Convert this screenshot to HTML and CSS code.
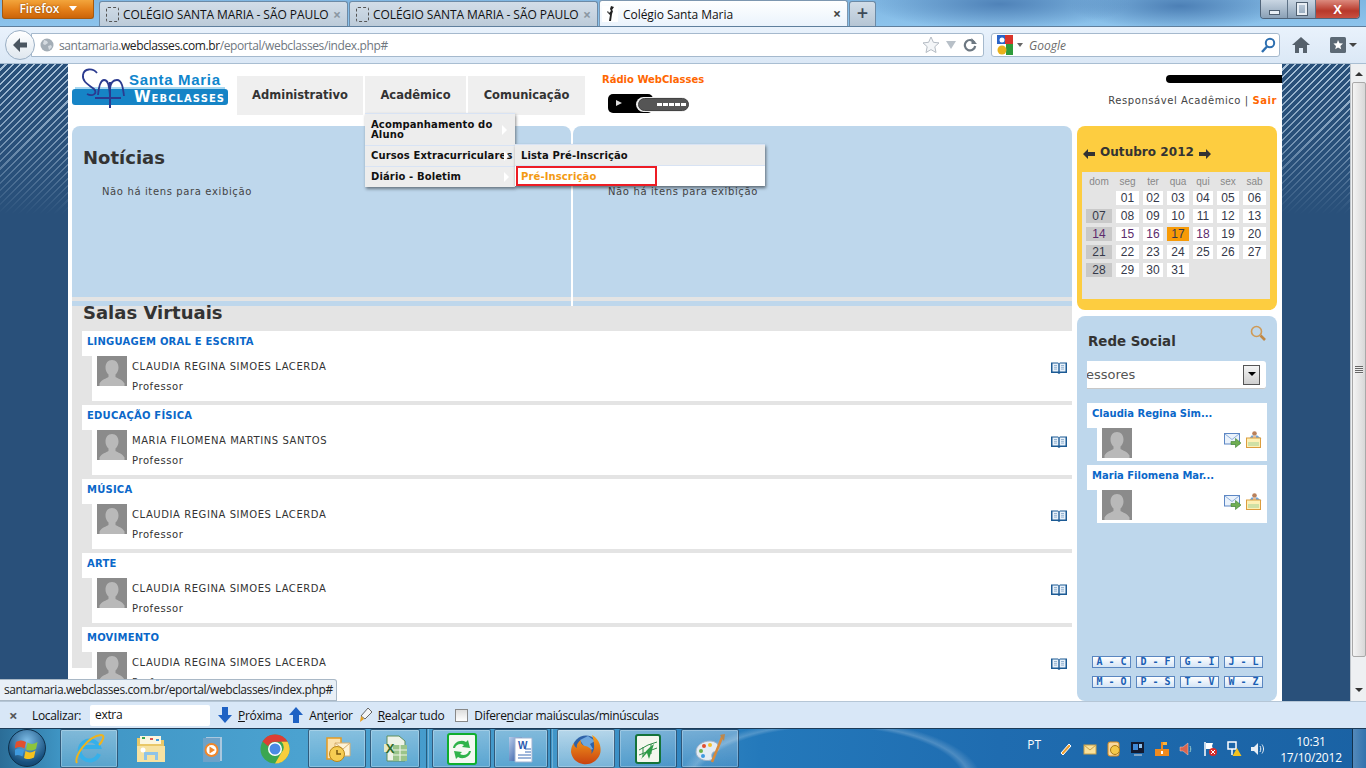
FILE: index.html
```html
<!DOCTYPE html>
<html lang="pt">
<head>
<meta charset="utf-8">
<title>Colégio Santa Maria</title>
<link rel="stylesheet" href="styles.css">
</head>
<body>
<svg class="defs" width="0" height="0" aria-hidden="true">
  <defs>
    <linearGradient id="foxg" x1="0" y1="0" x2="0" y2="1"><stop offset="0" stop-color="#f7a21e"/><stop offset="1" stop-color="#c9420f"/></linearGradient>
    <linearGradient id="wordg" x1="0" y1="0" x2="1" y2="1"><stop offset="0" stop-color="#b9cdea"/><stop offset="1" stop-color="#234f9e"/></linearGradient>
  </defs>
  <symbol id="avatar" viewBox="0 0 30 30"><rect width="30" height="30" fill="#8b8b8b"/><path d="M15 4c4 0 6.500 3 6.500 7.500 0 3-1.300 5.500-3 7v2.500c2 1.500 7 2.500 9 6.500v2.500H2.500V27.500c2-4 7-5 9-6.500v-2.500c-1.700-1.500-3-4-3-7C8.500 7 11 4 15 4z" fill="#b9b9b9"/></symbol>
  <symbol id="book" viewBox="0 0 16 14"><path d="M0 1.500h7l1 1 1-1h7v10.500H9.500l-1.500 1-1.500-1H0z" fill="#1c5a94"/><path d="M1.500 2.500h5.800v8H1.500zM8.700 2.500h5.800v8H8.700z" fill="#e8f1fa"/><path d="M3 4.500h3M3 6.300h3M3 8.100h3M10 4.500h3M10 6.300h3M10 8.100h3" stroke="#7fa3c6" stroke-width=".8"/></symbol>
  <symbol id="mail" viewBox="0 0 17 15"><rect x=".5" y=".5" width="15" height="10.500" fill="#eaf2fb" stroke="#5c86c4"/><path d="M1 1l7 5.500L15 1" fill="none" stroke="#8fb0dc"/><path d="M7 8.500h4.500V5.500L17 10l-5.500 4.500v-3H7z" fill="#6fae52" stroke="#3e7f2f" stroke-width=".6"/></symbol>
  <symbol id="folder" viewBox="0 0 16 17"><circle cx="8.500" cy="2.500" r="2.300" fill="#b9805a"/><path d="M3 8l2.500-3.500h6L15.500 8z" fill="#6fa5d8"/><path d="M7 4.500h3v3H7z" fill="#e8c0a0"/><rect x=".5" y="7" width="14" height="9.500" fill="#fdf0b5" stroke="#dc9d3e"/><rect x="2" y="11" width="11" height="4" fill="#cfe0a5"/></symbol>
  <symbol id="bluearrow" viewBox="0 0 14 16"><path d="M4 0h6v8h4l-7 8-7-8h4z"/></symbol>
</svg>

<header class="tabbar">
  <div class="ffbtn">Firefox <span class="ffarrow"></span></div>
  <div class="tab"><span class="dash"></span><span class="tabtext">COLÉGIO SANTA MARIA - SÃO PAULO</span><span class="tabx">×</span></div>
  <div class="tab"><span class="dash"></span><span class="tabtext">COLÉGIO SANTA MARIA - SÃO PAULO</span><span class="tabx">×</span></div>
  <div class="tab active">
    <svg class="favicon" viewBox="0 0 16 16"><rect width="16" height="16" fill="#fff"/><path d="M9 0l3 1-2 3 1 1-1 3-1 7H7l1-6-3-3 1-1 1 2 2-2-1-2z" fill="#222"/></svg>
    <span class="tabtext">Colégio Santa Maria</span><span class="tabx dark">×</span></div>
  <div class="newtab">+</div>
  <div class="winctl">
    <span class="wbtn"><span class="wmin"></span></span>
    <span class="wbtn"><span class="wmax"></span></span>
    <span class="wbtn wclose">X</span>
  </div>
</header>

<nav class="navbar">
  <div class="back"><svg viewBox="0 0 18 18" width="18" height="18"><path d="M9 2L2 9l7 7v-4.500h7v-5H9z" fill="#4a5560"/></svg></div>
  <div class="urlbar">
    <svg class="globe" viewBox="0 0 14 14" width="14" height="14"><circle cx="7" cy="7" r="6.500" fill="#a3adb6"/><path d="M4 2l3 1 1 2-3 2-2-1zM8 8l3-1 1 2-3 3z" fill="#d4dae0"/></svg>
    <span class="url"><span class="dim">santamaria.</span>webclasses.com.br<span class="dim">/eportal/webclasses/index.php#</span></span>
    <svg class="star" viewBox="0 0 18 18" width="18" height="18"><path d="M9 1l2.400 5.300 5.600.6-4.200 3.800 1.200 5.800L9 13.600l-5 2.900 1.200-5.800L1 6.900l5.600-.6z" fill="#f4f6f8" stroke="#b5bcc4"/></svg>
    <span class="urldrop"></span>
    <svg class="reload" viewBox="0 0 14 14" width="14" height="14"><path d="M11.500 4.500A5.200 5.200 0 1 0 12.200 8" fill="none" stroke="#6d7882" stroke-width="2.200"/><path d="M8.500 0v6h5.500z" fill="#6d7882"/></svg>
  </div>
  <div class="searchbar">
    <svg class="glogo" viewBox="0 0 16 20" width="16" height="20"><rect x="0" y="0" width="8" height="9" fill="#2b65c9"/><rect x="8" y="0" width="8" height="9" fill="#d9352b"/><rect x="9" y="9" width="7" height="11" fill="#2f9b3a"/><circle cx="5" cy="15" r="4.500" fill="#e9b11c"/><circle cx="5" cy="5" r="2.500" fill="#fff"/></svg>
    <span class="gdrop"></span>
    <span class="gtext">Google</span>
    <svg class="gsearch" viewBox="0 0 16 16" width="16" height="16"><circle cx="10" cy="6" r="4.200" fill="none" stroke="#2d6fb0" stroke-width="2"/><path d="M7 9.500L2 15" stroke="#2d6fb0" stroke-width="2.400"/></svg>
  </div>
  <svg class="home" viewBox="0 0 18 16" width="18" height="16"><path d="M9 0l9 8h-3v8h-4v-5H7v5H3V8H0z" fill="#56616c"/></svg>
  <div class="bmk"><svg viewBox="0 0 16 16" width="16" height="16"><rect width="16" height="16" rx="1.500" fill="#5c6975"/><path d="M8 3l1.500 3.200 3.500.4-2.600 2.300.8 3.400L8 10.500l-2.800 1.800.8-3.400L3.400 6.600l3.500-.4z" fill="#fff"/></svg><span class="bmkarrow"></span></div>
</nav>

<main class="page">
  <div class="stripe"></div>
  <div class="sheet">
    <section class="head">
      <svg class="logo" viewBox="0 0 156 40" width="156" height="40">
        <path d="M3 19h150v2H3z" fill="#a9d8f0"/>
        <rect x="0" y="21" width="156" height="16" rx="3" fill="#1684c6"/>
        <text x="57" y="17" class="logo-sm" textLength="91">Santa Maria</text>
        <text x="62" y="34" class="logo-web" textLength="90"><tspan class="logo-w">W</tspan>EBCLASSES</text>
        <path d="M25 5C21 0 12 0 11 7c-1 7 6 10 11 14 4 4-1 8-7 5" fill="none" stroke="#2b3a8f" stroke-width="1.800"/>
        <path d="M26 27c1-10 3-15 6-15 5 0 5 8 6 15M38 20c1-7 4-8 7-8 5 0 6 8 7 16" fill="none" stroke="#2b3a8f" stroke-width="1.800"/>
        <path d="M38 14v26M23 30h26" fill="none" stroke="#2b3a8f" stroke-width="2"/>
      </svg>
      <ul class="mainnav">
        <li class="mainitem">Administrativo</li>
        <li class="mainitem">Acadêmico
          <div class="menu">
            <div class="mi two"><span>Acompanhamento do Aluno</span><i class="tri"></i></div>
            <div class="mi"><span class="nowrap">Cursos Extracurriculares</span><i class="tri"></i></div>
            <div class="mi"><span>Diário - Boletim</span><i class="tri"></i></div>
            <div class="submenu">
              <div class="si">Lista Pré-Inscrição</div>
              <div class="si sel">Pré-Inscrição<span class="redbox"></span></div>
            </div>
          </div>
        </li>
        <li class="mainitem">Comunicação</li>
      </ul>
      <div class="radio">
        <div class="radiot">Rádio WebClasses</div>
        <div class="player">
          <span class="play"></span>
          <span class="vol"><i></i><i></i><i></i><i></i><i></i></span>
        </div>
      </div>
      <div class="userbox">
        <div class="redact"></div>
        <div class="role">Responsável Acadêmico | <b>Sair</b></div>
      </div>
    </section>

    <section class="content">
      <div class="leftcol">
        <div class="twopanels">
          <article class="panel">
            <div class="panelbody">
              <h2 class="h">Notícias</h2>
              <p class="none">Não há itens para exibição</p>
            </div>
            <div class="paneldiv"></div><div class="panelfoot"></div>
          </article>
          <article class="panel">
            <div class="panelbody">
              <h2 class="h">&nbsp;</h2>
              <p class="none second">Não há itens para exibição</p>
            </div>
            <div class="paneldiv"></div><div class="panelfoot"></div>
          </article>
        </div>
        <div class="salas">
          <h2 class="h salash">Salas Virtuais</h2>
          <div class="cards">
            <article class="card">
              <a class="ctitle">LINGUAGEM ORAL E ESCRITA</a>
              <div class="cbody"><svg class="av"><use href="#avatar"/></svg><div class="who"><div>CLAUDIA REGINA SIMOES LACERDA</div><div>Professor</div></div><svg class="bk"><use href="#book"/></svg></div>
            </article>
            <article class="card">
              <a class="ctitle">EDUCAÇÃO FÍSICA</a>
              <div class="cbody"><svg class="av"><use href="#avatar"/></svg><div class="who"><div>MARIA FILOMENA MARTINS SANTOS</div><div>Professor</div></div><svg class="bk"><use href="#book"/></svg></div>
            </article>
            <article class="card">
              <a class="ctitle">MÚSICA</a>
              <div class="cbody"><svg class="av"><use href="#avatar"/></svg><div class="who"><div>CLAUDIA REGINA SIMOES LACERDA</div><div>Professor</div></div><svg class="bk"><use href="#book"/></svg></div>
            </article>
            <article class="card">
              <a class="ctitle">ARTE</a>
              <div class="cbody"><svg class="av"><use href="#avatar"/></svg><div class="who"><div>CLAUDIA REGINA SIMOES LACERDA</div><div>Professor</div></div><svg class="bk"><use href="#book"/></svg></div>
            </article>
            <article class="card">
              <a class="ctitle">MOVIMENTO</a>
              <div class="cbody"><svg class="av"><use href="#avatar"/></svg><div class="who"><div>CLAUDIA REGINA SIMOES LACERDA</div><div>Professor</div></div><svg class="bk"><use href="#book"/></svg></div>
            </article>
          </div>
        </div>
      </div>

      <aside class="rightcol">
        <section class="calpanel">
          <div class="caltitle">
            <svg class="calarrow" viewBox="0 0 12 10"><path d="M0 5l5-5v3h7v4H5v3z"/></svg>
            <span>Outubro 2012</span>
            <svg class="calarrow" viewBox="0 0 12 10"><path d="M12 5L7 0v3H0v4h7v3z"/></svg>
          </div>
          <div class="calgrid">
            <span class="dh">dom</span><span class="dh">seg</span><span class="dh">ter</span><span class="dh">qua</span><span class="dh">qui</span><span class="dh">sex</span><span class="dh">sab</span>
            <span class="blank"></span><span class="d">01</span><span class="d">02</span><span class="d">03</span><span class="d">04</span><span class="d">05</span><span class="d">06</span>
            <span class="d sun">07</span><span class="d">08</span><span class="d">09</span><span class="d">10</span><span class="d">11</span><span class="d">12</span><span class="d">13</span>
            <span class="d sun v">14</span><span class="d v">15</span><span class="d v">16</span><span class="d today">17</span><span class="d v">18</span><span class="d">19</span><span class="d">20</span>
            <span class="d sun">21</span><span class="d">22</span><span class="d">23</span><span class="d">24</span><span class="d">25</span><span class="d">26</span><span class="d">27</span>
            <span class="d sun">28</span><span class="d">29</span><span class="d">30</span><span class="d">31</span>
          </div>
        </section>
        <section class="social">
          <div class="socialhead">
            <h3 class="socialt">Rede Social</h3>
            <svg class="lens" viewBox="0 0 16 16" width="16" height="16"><circle cx="6.500" cy="6.500" r="5" fill="none" stroke="#cf9a56" stroke-width="1.600"/><path d="M10.500 10.500L15 15" stroke="#c08845" stroke-width="2.600"/></svg>
          </div>
          <div class="sel-box"><span class="sel-t">essores</span><span class="sel-b"><i></i></span></div>
          <article class="pcard">
            <a class="ptitle">Claudia Regina Sim...</a>
            <div class="pbody"><svg class="av"><use href="#avatar"/></svg><svg class="pmail"><use href="#mail"/></svg><svg class="pfold"><use href="#folder"/></svg></div>
          </article>
          <article class="pcard">
            <a class="ptitle">Maria Filomena Mar...</a>
            <div class="pbody"><svg class="av"><use href="#avatar"/></svg><svg class="pmail"><use href="#mail"/></svg><svg class="pfold"><use href="#folder"/></svg></div>
          </article>
          <div class="alpha">
            <span>A - C</span><span>D - F</span><span>G - I</span><span>J - L</span>
            <span>M - O</span><span>P - S</span><span>T - V</span><span>W - Z</span>
          </div>
        </section>
      </aside>
    </section>
  </div>
  <div class="stripe"></div>
  <div class="scrollbar">
    <span class="sarrow up"></span>
    <div class="thumb"><span class="grip"></span></div>
    <span class="sarrow down"></span>
  </div>
  <div class="statustip">santamaria.webclasses.com.br/eportal/webclasses/index.php#</div>
</main>

<footer class="findbar">
  <span class="fx">×</span>
  <span class="flabel">Localizar:</span>
  <span class="finput">extra</span>
  <svg class="farrow f1"><use href="#bluearrow"/></svg><span class="fitem"><u>P</u>róxima</span>
  <svg class="farrow f2 flip"><use href="#bluearrow"/></svg><span class="fitem">An<u>t</u>erior</span>
  <svg class="fpen" viewBox="0 0 14 16" width="14" height="16"><path d="M9 1l4 4-7 7-4-3z" fill="#f2f4f6" stroke="#666"/><path d="M2 9l3 3-4 3z" fill="#e8a020"/></svg><span class="fitem"><u>R</u>ealçar tudo</span>
  <span class="fcheck"></span><span class="fitem">Difere<u>n</u>ciar maiúsculas/minúsculas</span>
</footer>

<footer class="taskbar">
  <div class="orb"><svg viewBox="0 0 24 22" width="24" height="22"><path d="M1 5c4-2 7-2 10 0l-1.500 6.500c-3-2-6-2-10 0z" fill="#e2502e"/><path d="M12.500 5.500c3 2 6 2 10-.5l-1.500 7c-4 2-7 2-10 .5z" fill="#8cc43c"/><path d="M-.5 13c3-2 6-2 9.500 0L7.500 19.500c-3-2-6-2-9.500 0z" fill="#3f9ae0"/><path d="M10.500 14c3 2 6 2 10-.5l-1.500 7c-4 2-7 2-10 .5z" fill="#f6c21e"/></svg></div>
  <div class="tb boxed ie"><svg viewBox="0 0 32 32" width="32" height="32"><path d="M26 21a10 10 0 1 1 0-7H7.500" fill="none" stroke="#35b0ea" stroke-width="4"/><path d="M4 30C0 24 15 3 28 2c5 0 1 7-2 10" fill="none" stroke="#f0b31c" stroke-width="2"/></svg></div>
  <div class="tb"><svg viewBox="0 0 32 32" width="32" height="32"><path d="M2 5h12l2 2h13v22H2z" fill="#e9c868"/><rect x="5" y="3" width="21" height="8" fill="#fbf6df"/><rect x="7" y="4" width="3" height="2" fill="#3aa651"/><rect x="15" y="5" width="3" height="2" fill="#d9534f"/><rect x="21" y="6" width="3" height="2" fill="#3f9ae0"/><path d="M2 13h28v16H2z" fill="#f6e2a2"/><path d="M9 27v-8h14v8h-3v-5h-8v5z" fill="#8ec3e8"/><circle cx="8" cy="17" r="2.500" fill="#fff"/></svg></div>
  <div class="tb"><svg viewBox="0 0 32 32" width="32" height="32"><rect x="9" y="4" width="16" height="24" fill="#a9c8df"/><rect x="6" y="5" width="17" height="24" fill="#6ea2c8"/><circle cx="14.500" cy="17" r="7" fill="#f0872a"/><circle cx="14.500" cy="17" r="5" fill="#fff"/><path d="M12.500 13.500l5.500 3.500-5.500 3.500z" fill="#f0872a"/></svg></div>
  <div class="tb chrome"><svg viewBox="0 0 32 32" width="32" height="32"><circle cx="16" cy="16" r="14.500" fill="#3aa651"/><path d="M16 1.500a14.500 14.500 0 0 1 12.600 7.250H16a7.300 7.300 0 0 0-6.800 4.600L3.500 8.500A14.500 14.500 0 0 1 16 1.500z" fill="#dc3e35"/><path d="M28.600 8.750A14.500 14.500 0 0 1 16 30.500l6.300-10.800a7.300 7.300 0 0 0 0-11z" fill="#f7ce3c"/><circle cx="16" cy="16" r="7" fill="#fff"/><circle cx="16" cy="16" r="5.500" fill="#4a8ae4"/></svg></div>
  <div class="tb boxed"><svg viewBox="0 0 32 32" width="32" height="32"><path d="M6 5h14v21H6z" fill="#fbe3b0" stroke="#e39a22" stroke-width="1.500"/><path d="M14 10h15v13H14z" fill="#fdf3d8" stroke="#d8b070"/><path d="M14 10l8 6 7-6" fill="none" stroke="#d8b070"/><circle cx="16" cy="21" r="7.500" fill="#f6cd52" stroke="#b98718"/><path d="M16 17v4h4" fill="none" stroke="#7a5a10" stroke-width="1.500"/></svg></div>
  <div class="tb boxed w50"><svg viewBox="0 0 32 32" width="32" height="32"><path d="M8 3h12l6 5v20H8z" fill="#eef3e8" stroke="#5f8f5f"/><path d="M5 11h10v8H5z" fill="#e4e9c8"/><path d="M14 12h14v16H14z" fill="#9bc48a"/><path d="M14 17h14M14 22h14M21 12v16" stroke="#eef3e8" stroke-width="1.200"/><text x="11" y="20" class="xl xlg">X</text></svg></div>
  <span class="tsep s1"></span>
  <div class="tb boxed w59"><svg viewBox="0 0 34 34" width="34" height="34"><rect x="3" y="2" width="28" height="30" rx="2" fill="#f4f8f2" stroke="#0fae2e" stroke-width="2"/><path d="M8 16c1-6 8-9 13-6l2-2 2 8-8-1 2-2c-3-2-8-1-9 3zM26 19c-1 6-8 9-13 6l-2 2-2-8 8 1-2 2c3 2 8 1 9-3z" fill="#2fb34a"/></svg></div>
  <div class="tb boxed w54"><svg viewBox="0 0 32 32" width="32" height="32"><path d="M4 4h13v24H4z" fill="url(#wordg)"/><path d="M10 5h17v24H10z" fill="#fff" stroke="#9db3d2"/><path d="M20 16h6M20 19h6M13 22h13M13 25h13" stroke="#3f6eb5" stroke-width="1.200"/><text x="13" y="16" class="xl xlb">W</text></svg></div>
  <span class="tsep s2"></span>
  <div class="tb boxed lit"><svg viewBox="0 0 34 34" width="34" height="34"><circle cx="17" cy="17" r="13.500" fill="#2f62a8"/><path d="M11 8l8-4 7 5-5 3 3 5-6 2z" fill="#6fa8de"/><path d="M23 3c7 4 10 12 8 19-3 8-10 11-17 10C7 31 3 26 2 20c0-4 1-7 3-9 0 3 1 4 3 5-1-3 1-6 4-8-1 3 1 5 4 6 5 1 8 4 6 8 5-4 3-13 1-19z" fill="url(#foxg)"/></svg></div>
  <div class="tb boxed"><svg viewBox="0 0 32 32" width="32" height="32"><rect x="4" y="2" width="24" height="28" rx="2" fill="#f4f7ee" stroke="#14733a" stroke-width="2"/><path d="M7 17l9-5 9-3M7 22l10-4 8-3M11 14v10M19 11v10" fill="none" stroke="#2d8a46" stroke-width="1"/><path d="M9 26c3-6 7-11 13-15l-5 15-2-6z" fill="#2d9a46"/></svg></div>
  <div class="tb boxed"><svg viewBox="0 0 32 32" width="32" height="32"><path d="M2 19c0-7 7-11 14-11 5 0 9 3 9 7 0 5-6 2-7 6s2 5-1 6c-7 2-15-2-15-8z" fill="#e4ecf4" stroke="#9fb3c6"/><circle cx="7" cy="18" r="2" fill="#6ab04c"/><circle cx="10" cy="13" r="2" fill="#e2502e"/><circle cx="16" cy="12" r="2" fill="#f2c12e"/><circle cx="9" cy="23" r="2" fill="#3f9ae0"/><path d="M29 2L18 29" stroke="#d8893a" stroke-width="2.500"/><path d="M26 2l5-1-1 7z" fill="#b98850"/></svg></div>

  <div class="tray">
    <span class="lang">PT</span>
    <svg class="ti" viewBox="0 0 16 16"><path d="M3 12l8-9 2 2-8 9z" fill="#f0a030" stroke="#fff"/></svg>
    <svg class="ti" viewBox="0 0 16 16"><rect x="2" y="4" width="12" height="9" fill="#f9e19a" stroke="#c9a24a"/><path d="M2 4l6 5 6-5" fill="none" stroke="#c9a24a"/></svg>
    <svg class="ti" viewBox="0 0 16 16"><rect x="2" y="1" width="11" height="14" rx="2" fill="#f8d9a0" stroke="#d88a1c"/><circle cx="9" cy="9" r="4.500" fill="#f4c94a" stroke="#a97a18"/></svg>
    <svg class="ti" viewBox="0 0 16 16"><rect x="1" y="1" width="13" height="11" fill="#121a30"/><rect x="3" y="3" width="5" height="6" fill="#3f8ad8"/><rect x="9" y="3" width="3" height="4" fill="#8fc2ee"/><path d="M4 14h8" stroke="#ddd"/></svg>
    <svg class="ti" viewBox="0 0 16 16"><path d="M1 8h14v7H1z" fill="#ef8a1e"/><path d="M7 1h2v7H7z" fill="#ef8a1e"/><path d="M9 1h4v3H9z" fill="#f7b23c"/><rect x="7" y="10" width="2" height="3" fill="#fff"/></svg>
    <svg class="ti" viewBox="0 0 16 16"><path d="M2 6h3l5-4v12l-5-4H2z" fill="#d9644e" stroke="#f2c9be" stroke-width=".5"/><path d="M12 5c1 2 1 4 0 6" stroke="#9cc" fill="none"/></svg>
    <svg class="ti" viewBox="0 0 16 16"><path d="M3 1v14" stroke="#fff" stroke-width="1.500"/><path d="M4 2h7l-1 3 1 3H4z" fill="#fff"/><circle cx="11" cy="11" r="4" fill="#d62b2b"/><path d="M9 9l4 4M13 9l-4 4" stroke="#fff"/></svg>
    <svg class="ti" viewBox="0 0 16 16"><rect x="2" y="1" width="8" height="7" fill="none" stroke="#fff" stroke-width="1.500"/><path d="M6 8v6" stroke="#fff" stroke-width="1.500"/><path d="M11 7l4.500 8h-9z" fill="#f4c21e"/></svg>
    <svg class="ti" viewBox="0 0 16 16"><path d="M1 6h3l4-4v12l-4-4H1z" fill="#e8eef4"/><path d="M10 5c1 2 1 4 0 6M12 3.500c2 3 2 6 0 9" stroke="#e8eef4" fill="none"/></svg>
    <div class="clock"><div>10:31</div><div>17/10/2012</div></div>
  </div>
  <div class="showdesk"></div>
</footer>
</body>
</html>
```
FILE: styles.css
```css
* { box-sizing: border-box; }
html, body { margin: 0; padding: 0; }
body {
  width: 1366px; height: 768px; overflow: hidden;
  display: flex; flex-direction: column;
  font-family: "DejaVu Sans", Verdana, sans-serif;
  background: #fff; color: #333;
}
.defs { position: absolute; }
ul { list-style: none; margin: 0; padding: 0; }
h2, h3, p { margin: 0; }

/* tab strip */
.tabbar {
  height: 27px; flex: none; display: flex; align-items: flex-end; padding-left: 2px;
  background:
    radial-gradient(ellipse 130px 26px at 1000px 4px, #4f82b8 0, rgba(79,130,184,0) 100%),
    radial-gradient(ellipse 110px 24px at 1180px 6px, #4c7fb5 0, rgba(76,127,181,0) 100%),
    linear-gradient(#7fb6e2, #8cc3ec);
  border-bottom: 1px solid #5f7f9d;
  font-family: "Open Sans", sans-serif;
}
.ffbtn {
  align-self: flex-start; width: 92px; height: 19px; margin-right: 5px;
  background: linear-gradient(#f2a53c, #e5811a 50%, #cc6408);
  border: 1px solid #a55a10; border-top: 0; border-radius: 0 0 3px 3px;
  color: #fff; font-size: 12px; font-weight: 600; line-height: 17px; text-align: center;
  text-shadow: 0 0 2px #7a3d00;
}
.ffarrow {
  display: inline-block; width: 0; height: 0; margin-left: 6px; vertical-align: 2px;
  border: 4px solid transparent; border-top: 5px solid #fff; border-bottom: 0;
}
.tab {
  width: 249px; height: 25px; margin-right: 1px; display: flex; align-items: center; padding: 1px 6px 0 6px;
  background: linear-gradient(#d2dde8, #bccbd9);
  border: 1px solid #6c8aa6; border-bottom: 0; border-radius: 3px 3px 0 0;
  font-size: 12px; color: #111;
}
.tab.active { background: linear-gradient(#fff, #eaf3fc); height: 26px; border-color: #7d97b0; padding-left: 2px; }
.dash { width: 13px; height: 15px; border: 1px dashed #555; border-radius: 2px; margin-right: 4px; flex: none; }
.favicon { width: 16px; height: 16px; margin-right: 5px; flex: none; }
.tabtext { flex: 1; white-space: nowrap; letter-spacing: -.06px; }
.tabx { color: #8b97a3; font-size: 14px; font-weight: 700; line-height: 1; }
.tabx.dark { color: #444; }
.newtab {
  width: 27px; height: 25px; background: linear-gradient(#d2dde8, #b5c5d4);
  border: 1px solid #6c8aa6; border-bottom: 0; border-radius: 3px 3px 0 0;
  font-size: 20px; font-weight: 600; line-height: 22px; text-align: center; color: #3d4a57;
}
.winctl {
  align-self: flex-start; margin-left: auto; margin-right: 6px; width: 100px; height: 19px; display: flex;
  border: 1px solid #50647a; border-top: 0; border-radius: 0 0 4px 4px; overflow: hidden;
}
.wbtn { width: 28px; display: flex; align-items: center; justify-content: center; background: linear-gradient(#c9d6e3, #8aa0b6); border-right: 1px solid #5d7186; }
.wclose { width: 44px; border: 0; background: linear-gradient(#dc8a7e, #b8382a 60%, #c85040); color: #fff; font: 700 13px "Liberation Sans", sans-serif; }
.wmin { width: 11px; height: 5px; background: #e8eef4; border: 1px solid #4f5f70; margin-top: 6px; }
.wmax { width: 10px; height: 12px; background: transparent; border: 2px solid #e8eef4; outline: 1px solid #4f5f70; }

/* nav */
.navbar {
  height: 37px; flex: none; display: flex; align-items: center; padding-left: 5px;
  background: linear-gradient(#e9f2fc, #dbe8f6);
  border-bottom: 1px solid #a9bed2;
  font-family: "Open Sans", sans-serif;
}
.back {
  width: 30px; height: 30px; border-radius: 50%; z-index: 1; flex: none;
  background: linear-gradient(#fff, #dfe7ef); border: 1px solid #9aafc4;
  display: flex; align-items: center; justify-content: center;
}
.urlbar {
  width: 953px; height: 24px; margin-left: -4px; padding: 0 6px 0 9px; display: flex; align-items: center;
  background: #fff; border: 1px solid #a5b9cd; border-radius: 0 3px 3px 0;
}
.globe { margin-left: -1px; flex: none; }
.url { margin-left: 5px; font-size: 12px; letter-spacing: -.39px; color: #222; flex: 1; white-space: nowrap; }
.dim { color: #6f7780; }
.urldrop { width: 0; height: 0; margin: 0 7px 0 6px; border: 5px solid transparent; border-top: 8px solid #b8c0c8; border-bottom: 0; }
.searchbar {
  width: 289px; height: 24px; margin-left: 7px; display: flex; align-items: center; padding: 0 3px 0 5px;
  background: #fff; border: 1px solid #a5b9cd; border-radius: 3px;
}
.gdrop { width: 0; height: 0; margin: 0 6px 0 4px; border: 3px solid transparent; border-top: 4px solid #666; border-bottom: 0; }
.gtext { flex: 1; font-size: 12px; font-style: italic; color: #6c6c6c; }
.home { margin-left: 12px; flex: none; }
.bmk { margin-left: 20px; display: flex; align-items: center; }
.bmkarrow { width: 0; height: 0; margin-left: 3px; border: 4px solid transparent; border-top: 4px solid #444; border-bottom: 0; }

/* page */
.page { position: relative; height: 638px; flex: none; display: flex; overflow: hidden; border-bottom: 1px solid #b5c6d6; }
.stripe {
  width: 68px; flex: none;
  background:
    linear-gradient(rgba(41,80,122,0) 0, rgba(41,80,122,.35) 70px, #29507a 150px),
    repeating-linear-gradient(135deg, #29507a 0 3.5px, #a9c2da 3.5px 5px);
}
.sheet { width: 1214px; flex: none; background: #fff; }
.head { height: 62px; display: flex; }
.logo { margin: 4px 0 0 4px; flex: none; }
.logo-sm { font: 700 15px "Liberation Sans", sans-serif; fill: #0f86cd; }
.logo-web { font: 700 10px "DejaVu Sans", sans-serif; fill: #fff; }
.logo-w { font-size: 15px; }
.mainnav { display: grid; grid-template-columns: 126px 101px 117px; gap: 2px; margin: 12px 0 0 9px; height: 38px; }
.mainitem {
  position: relative; background: #efefef; text-align: center; line-height: 39px;
  font-size: 11.500px; font-weight: 700; color: #333;
}
.menu {
  position: absolute; left: 0; top: 37px; width: 150px; z-index: 5; text-align: left;
  background: #ededed; box-shadow: 1px 2px 3px rgba(0,0,0,.45);
  font-size: 10px; letter-spacing: .12px; line-height: 10px; color: #111;
}
.mi { height: 21px; padding: 0 6px; display: flex; align-items: center; justify-content: space-between; border-top: 1px solid #d8e3f4; }
.mi.two { height: 32px; padding-right: 8px; }
.mi span { width: 130px; flex: none; }
.nowrap { white-space: nowrap; }
.tri { width: 0; height: 0; border: 5px solid transparent; border-left: 5px solid #fff; border-right: 0; flex: none; margin-left: -1px; z-index: 1; }
.submenu { position: absolute; left: 150px; top: 31px; width: 250px; background: #fff; box-shadow: 1px 2px 3px rgba(0,0,0,.5); }
.si { position: relative; height: 21px; padding: 0 6px; line-height: 21px; background: #ededed; border-top: 1px solid #d8e3f4; }
.si.sel { background: #fff; color: #f39a12; }
.redbox { position: absolute; left: 1px; top: 0; width: 141px; height: 20px; border: 2px solid #ed1c24; }
.radio { margin: 10px 0 0 17px; width: 180px; }
.radiot { font-size: 10px; font-weight: 700; color: #f60; line-height: 11px; }
.player { position: relative; width: 90px; height: 20px; margin: 9px 0 0 6px; }
.play { display: block; width: 45px; height: 19px; background: #000; border-radius: 5px; position: relative; }
.play::after { content: ""; position: absolute; left: 8px; top: 6px; border: 3px solid transparent; border-left: 6px solid #ddd; border-right: 0; }
.vol {
  position: absolute; left: 30px; top: 4px; width: 51px; height: 13px; border-radius: 7px;
  background: #555; border: 1px solid #444; box-shadow: -1px 0 0 1px #eee;
  display: flex; align-items: center; gap: 1px; padding-left: 18px;
}
.vol i { width: 5px; height: 3px; background: #fff; }
.userbox { margin-left: auto; margin-top: 11px; padding-right: 5px; text-align: right; }
.redact { width: 116px; height: 8px; margin-right: -5px; margin-left: auto; background: #000; border-radius: 4px 0 0 4px; }
.role { margin-top: 12px; font-size: 10px; letter-spacing: .56px; color: #444; line-height: 12px; white-space: nowrap; }
.role b { color: #f60; }

.content { display: flex; padding-left: 4px; gap: 5px; }
.leftcol { width: 1000px; flex: none; }
.twopanels { display: flex; gap: 2px; }
.panel { width: 499px; height: 180px; display: flex; flex-direction: column; background: #bed7ec; border-radius: 8px 8px 0 0; }
.panelbody { flex: 1; }
.paneldiv { height: 4px; background: #e4e4e4; }
.panelfoot { height: 5px; }
.h { font-size: 18px; line-height: 24px; font-weight: 700; color: #333; padding: 20px 0 0 11px; }
.none { font-size: 10px; letter-spacing: .63px; color: #444; padding: 16px 0 0 30px; line-height: 12px; }
.none.second { padding-left: 35px; }
.salas { height: 362px; background: #e4e4e4; padding-left: 10px; }
.salash { padding: 0 0 0 1px; height: 25px; line-height: 14px; }
.cards { display: flex; flex-direction: column; gap: 4px; }
.card { height: 70px; }
.ctitle { display: block; height: 25px; padding-left: 5px; background: #fff; line-height: 21px; font-size: 10px; font-weight: 700; letter-spacing: .22px; color: #0a67c9; }
.cbody { margin-left: 10px; height: 45px; background: #fff; display: flex; padding-left: 5px; align-items: flex-start; }
.av { width: 30px; height: 30px; flex: none; }
.who { margin-left: 5px; padding-top: 1px; font-size: 10px; letter-spacing: .57px; line-height: 20px; flex: 1; color: #333; }
.bk { width: 16px; height: 14px; margin: 5px 5px 0 0; flex: none; }

.rightcol { width: 200px; flex: none; display: flex; flex-direction: column; gap: 6px; }
.calpanel { height: 184px; background: #fdcd40; border-radius: 8px; padding: 0 7px 0 5px; }
.caltitle { height: 46px; display: flex; align-items: center; gap: 5px; padding: 6px 0 0 1px; font-size: 12px; letter-spacing: .05px; font-weight: 700; color: #333; }
.caltitle span { white-space: nowrap; }
.calarrow { width: 12px; height: 10px; fill: #333; flex: none; margin-top: 3px; }
.calgrid {
  height: 127px; background: #e4e4e4; padding: 4px 0 0 4px;
  display: grid; grid-template-columns: 26px 23px 20px 22px 20px 22px 23px; grid-template-rows: 11px repeat(5, 14px); gap: 4px;
  font-family: "Liberation Sans", Arial, sans-serif; text-align: center; font-size: 12px; line-height: 14px; color: #35394a;
}
.dh { font-size: 10px; line-height: 11px; color: #888; }
.d { background: #fff; }
.d.sun { background: #c9c9c9; }
.d.v { color: #5c2a6d; }
.d.today { background: #f79a06; }
.social { height: 385px; background: #bed7ec; border-radius: 8px; display: flex; flex-direction: column; padding: 0 0 13px 10px; }
.socialhead { height: 45px; display: flex; justify-content: space-between; padding: 9px 11px 0 1px; }
.socialt { font-size: 13.400px; font-weight: 700; color: #333; padding-top: 8px; line-height: 17px; }
.sel-box { width: 179px; height: 28px; background: #fff; border-radius: 0 3px 3px 0; display: flex; align-items: center; justify-content: space-between; padding-right: 6px; border-bottom: 1px solid #c8c8c8; overflow: hidden; }
.sel-t { font-size: 13px; color: #555; margin-left: -1px; }
.sel-b { width: 17px; height: 20px; border: 1px solid #555; background: linear-gradient(#f4f4f4, #cfcfcf); display: flex; justify-content: center; padding-top: 6px; }
.sel-b i { width: 0; height: 0; border: 4px solid transparent; border-top: 4px solid #000; border-bottom: 0; }
.pcard { width: 180px; margin-top: 4px; }
.sel-box + .pcard { margin-top: 14px; }
.ptitle { display: block; height: 25px; background: #fff; padding-left: 5px; line-height: 21px; font-size: 10px; font-weight: 700; letter-spacing: 0; color: #0a67c9; white-space: nowrap; }
.pbody { height: 33px; margin-left: 10px; background: #fff; display: flex; padding-left: 5px; }
.pmail { width: 17px; height: 15px; margin: 5px 0 0 92px; }
.pfold { width: 16px; height: 17px; margin: 3px 0 0 5px; }
.alpha { margin-top: auto; display: grid; grid-template-columns: repeat(4, 39px); grid-template-rows: 12px 12px; column-gap: 5px; row-gap: 8px; padding-left: 5px; }
.alpha span {
  border: 1px solid #5a86c0; background: linear-gradient(#fff, #d5e5f6);
  font: 700 10px/10px "DejaVu Sans Mono", monospace; color: #1a5fb4; text-align: center;
}

.scrollbar { width: 16px; flex: none; background: #eef0f2; border-left: 1px solid #bfc5cb; display: flex; flex-direction: column; align-items: center; }
.sarrow { width: 0; height: 0; border: 4px solid transparent; flex: none; }
.sarrow.up { margin: 8px 0 6px; border-top: 0; border-bottom: 4px solid #333; }
.sarrow.down { margin: 31px 0 0; border-bottom: 0; border-top: 4px solid #333; }
.thumb { width: 14px; height: 575px; background: linear-gradient(90deg, #f4f4f4, #d8d8d8); border: 1px solid #a9a9a9; border-radius: 2px; display: flex; align-items: center; justify-content: center; }
.grip { width: 8px; height: 8px; background: repeating-linear-gradient(#666 0 1px, #eee 1px 2px); }

.statustip {
  position: absolute; left: 0; bottom: 0; width: 337px; height: 22px; z-index: 6;
  background: #e9f0f7; border: 1px solid #a9b8c6; border-left: 0; border-radius: 0 3px 0 0;
  font-family: "Open Sans", sans-serif; font-size: 12px; letter-spacing: -.39px; line-height: 20px; padding-left: 4px; color: #222; white-space: nowrap;
}

/* find bar */
.findbar {
  height: 26px; flex: none; display: flex; align-items: center; padding-left: 9px;
  background: #d8e7f7; font-family: "Open Sans", sans-serif; font-size: 12px; letter-spacing: -.32px; color: #111;
}
.fx { font-size: 15px; font-weight: 700; color: #555; width: 23px; }
.flabel { width: 58px; }
.finput { width: 120px; height: 21px; background: #fff; padding-left: 5px; line-height: 20px; border-radius: 2px; }
.farrow { width: 14px; height: 16px; fill: #1f62c4; flex: none; }
.f1 { margin-left: 8px; margin-right: 6px; }
.f2 { margin-left: 7px; margin-right: 6px; }
.flip { transform: scaleY(-1); }
.fpen { margin: 0 5px 0 6px; flex: none; }
.fcheck { width: 13px; height: 13px; margin: 0 6px 0 11px; border: 1px solid #888; background: linear-gradient(#ddd, #fff); flex: none; }
.fitem { white-space: nowrap; }

/* taskbar */
.taskbar {
  height: 40px; flex: none; display: flex; align-items: stretch; padding-left: 8px;
  background:
    radial-gradient(ellipse 146px 59px at 830px 52px, rgba(255,255,255,0) 91%, rgba(255,255,255,.2) 96%, rgba(255,255,255,0) 104%),
    linear-gradient(90deg, #2b6d97 0, #3f95c4 60px, #4ba2d0 300px, #3f94c8 600px, #2479bb 760px, #1f6cb0 1000px, #1a62a4 100%);
  border-top: 1px solid #1d3c58;
  font-family: "Open Sans", sans-serif; color: #fff;
}
.orb {
  width: 38px; height: 38px; margin-top: 0; border-radius: 50%; flex: none;
  background: radial-gradient(circle at 50% 30%, #7dbce6, #17507f 70%, #0f3a5e);
  border: 1px solid #0d2f4a; display: flex; align-items: center; justify-content: center;
}
.tb { width: 58px; margin-left: 4px; flex: none; display: flex; align-items: center; justify-content: center; }
.orb + .tb { margin-left: 14px; }
.tb.boxed { background: linear-gradient(rgba(255,255,255,.34), rgba(255,255,255,.12)); border: 1px solid rgba(15,45,75,.65); box-shadow: inset 0 0 0 1px rgba(255,255,255,.25); border-radius: 2px; }
.tb.lit { background: linear-gradient(rgba(255,255,255,.62), rgba(255,255,255,.3)); }
.tb.w50 { width: 50px; }
.tb.w54 { width: 54px; margin-left: 3px; }
.tb.w59 { width: 59px; margin-left: 0; }
.xl { font: 700 11px "Liberation Sans", sans-serif; fill: #fff; text-anchor: middle; }
.xlg { fill: #2d6a2d; font-size: 13px; }
.xlb { fill: #2a5ab0; font-size: 10px; text-anchor: start; }
.tsep { width: 3px; flex: none; border-left: 1px solid rgba(10,30,50,.5); border-right: 1px solid rgba(255,255,255,.25); }
.s1 { margin-left: 6px; margin-right: 3px; }
.s2 { margin-left: 2px; margin-right: 0; }
.tray { margin-left: auto; display: flex; align-items: center; }
.lang { font-size: 12px; margin-right: 17px; margin-top: -8px; }
.ti { width: 16px; height: 16px; margin-right: 8px; flex: none; }
.clock { width: 66px; margin: 2px 2px 0 4px; text-align: center; font-size: 12px; line-height: 16px; letter-spacing: -.2px; }
.showdesk { width: 14px; flex: none; margin-left: 6px; background: linear-gradient(90deg, rgba(255,255,255,.25), rgba(255,255,255,.1)); border-left: 1px solid #12324e; }
```
